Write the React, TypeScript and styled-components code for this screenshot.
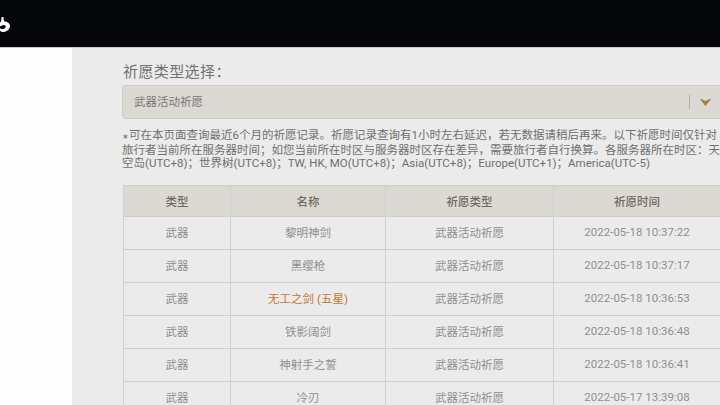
import { FC } from 'react';
import styled, { createGlobalStyle } from 'styled-components';

type Wish = { kind: string; name: string; wish: string; time: string; star?: boolean };

const wishes: Wish[] = [
    { kind: '武器', name: '黎明神剑', wish: '武器活动祈愿', time: '2022-05-18 10:37:22' },
    { kind: '武器', name: '黑缨枪', wish: '武器活动祈愿', time: '2022-05-18 10:37:17' },
    { kind: '武器', name: '无工之剑 (五星)', wish: '武器活动祈愿', time: '2022-05-18 10:36:53', star: true },
    { kind: '武器', name: '铁影阔剑', wish: '武器活动祈愿', time: '2022-05-18 10:36:48' },
    { kind: '武器', name: '神射手之誓', wish: '武器活动祈愿', time: '2022-05-18 10:36:41' },
    { kind: '武器', name: '冷刃', wish: '武器活动祈愿', time: '2022-05-17 13:39:08' },
];

const GlobalStyle = createGlobalStyle`
    html, body {
        margin: 0;
        padding: 0;
        width: 720px;
        height: 405px;
        overflow: hidden;
        font-family: Roboto, "Noto Sans CJK SC", sans-serif;
    }
`;

const Page = styled.div`
    display: flex;
    flex-direction: column;
    width: 720px;
    height: 405px;
    overflow: hidden;
`;

const Header = styled.header`
    flex: none;
    height: 47px;
    background: #05060a;
    border-bottom: 1px solid #c9c9c9;
    overflow: hidden;
`;

const Logo = styled.svg`
    display: block;
    width: 10px;
    height: 16px;
    margin-top: 17px;
`;

const Body = styled.div`
    flex: 1;
    display: flex;
    min-height: 0;
`;

const Sidebar = styled.aside`
    flex: none;
    width: 72px;
    background: #fdfdfe;
`;

const Main = styled.main`
    flex: 1;
    min-width: 0;
    background: #ebebeb;
    padding: 14px 0 0 50px;
    overflow: hidden;
`;

const Heading = styled.div`
    font-size: 15px;
    line-height: 20px;
    color: #717171;
    padding-left: 1px;
    letter-spacing: 0.4px;
`;

const Select = styled.div`
    box-sizing: border-box;
    display: flex;
    align-items: center;
    height: 34px;
    width: 610px;
    margin-top: 3px;
    padding: 0 0 1px 11px;
    background: #dcd8d4;
    border: 1px solid #cfcac3;
    border-radius: 3px;
    font-size: 11.5px;
    color: #7d7772;
`;

const SelectValue = styled.span`
    flex: 1;
    padding-bottom: 1px;
`;

const Divider = styled.span`
    width: 1px;
    height: 14px;
    background: #b9b0a5;
`;

const Caret = styled.svg`
    width: 11px;
    height: 8px;
    margin-left: 10px;
    margin-right: 20px;
`;

const Note = styled.p`
    margin: 10px 0 0;
    width: 640px;
    height: 41px;
    font-size: 11.5px;
    line-height: 13.5px;
    color: #6f6f6f;
    white-space: nowrap;
    overflow: hidden;
`;

const Asterisk = styled.span`
    font-size: 8px;
`;

const Table = styled.div`
    margin: 15px 0 0 1px;
    width: 597px;
    border-left: 1px solid #cfcfcf;
    border-top: 1px solid #cfcfcf;
`;

const Row = styled.div<{ $head?: boolean }>`
    display: grid;
    grid-template-columns: 107px 155px 168px 167px;
    height: ${(props) => (props.$head ? '31px' : '33px')};
    background: ${(props) => (props.$head ? '#dcd8d4' : 'transparent')};
    color: ${(props) => (props.$head ? '#75695f' : '#8f8f8f')};
    font-size: 11.5px;
    font-weight: ${(props) => (props.$head ? 500 : 400)};
`;

const Cell = styled.div<{ $star?: boolean; $head?: boolean }>`
    box-sizing: border-box;
    display: flex;
    align-items: center;
    justify-content: center;
    padding-bottom: ${(props) => (props.$head ? '0' : '2px')};
    border-right: 1px solid #cfcfcf;
    border-bottom: 1px solid #cfcfcf;
    color: ${(props) => (props.$star ? '#c0782e' : 'inherit')};
`;

const App: FC = () => (
    <Page>
        <GlobalStyle />
        <Header>
            <Logo viewBox="0 0 10 16">
                <path d="M1.500 0L3.500 0C3.500 2 3.800 3.500 4.500 4.500C7 4.500 9.500 6 10 8.500C10 12 7 15 3.500 15C2 15 1 14.500 0 14L0 11C1 12.500 3 12.500 4.500 11.500C5.800 10.500 6 9 5 8.200C3.500 7.500 1.500 8.500 0 9.500L0 5.500C1 4.800 1.500 4 1.500 0Z" fill="#fff" />
            </Logo>
        </Header>
        <Body>
            <Sidebar />
            <Main>
                <Heading>祈愿类型选择：</Heading>
                <Select>
                    <SelectValue>武器活动祈愿</SelectValue>
                    <Divider />
                    <Caret viewBox="0 0 11 8">
                        <path d="M0 0.500l5.500 2.500 5.500-2.500-1 2-4.500 5.500-4.500-5.500z" fill="#a77f3f" />
                    </Caret>
                </Select>
                <Note>
                    <Asterisk>∗</Asterisk>可在本页面查询最近6个月的祈愿记录。祈愿记录查询有1小时左右延迟，若无数据请稍后再来。以下祈愿时间仅针对
                    <br />
                    旅行者当前所在服务器时间；如您当前所在时区与服务器时区存在差异，需要旅行者自行换算。各服务器所在时区：天
                    <br />
                    空岛(UTC+8)；世界树(UTC+8)；TW, HK, MO(UTC+8)；Asia(UTC+8)；Europe(UTC+1)；America(UTC-5)
                </Note>
                <Table>
                    <Row $head>
                        <Cell $head>类型</Cell>
                        <Cell $head>名称</Cell>
                        <Cell $head>祈愿类型</Cell>
                        <Cell $head>祈愿时间</Cell>
                    </Row>
                    {wishes.map((w) => (
                        <Row key={w.time}>
                            <Cell>{w.kind}</Cell>
                            <Cell $star={w.star}>{w.name}</Cell>
                            <Cell>{w.wish}</Cell>
                            <Cell>{w.time}</Cell>
                        </Row>
                    ))}
                </Table>
            </Main>
        </Body>
    </Page>
);

export default App;
